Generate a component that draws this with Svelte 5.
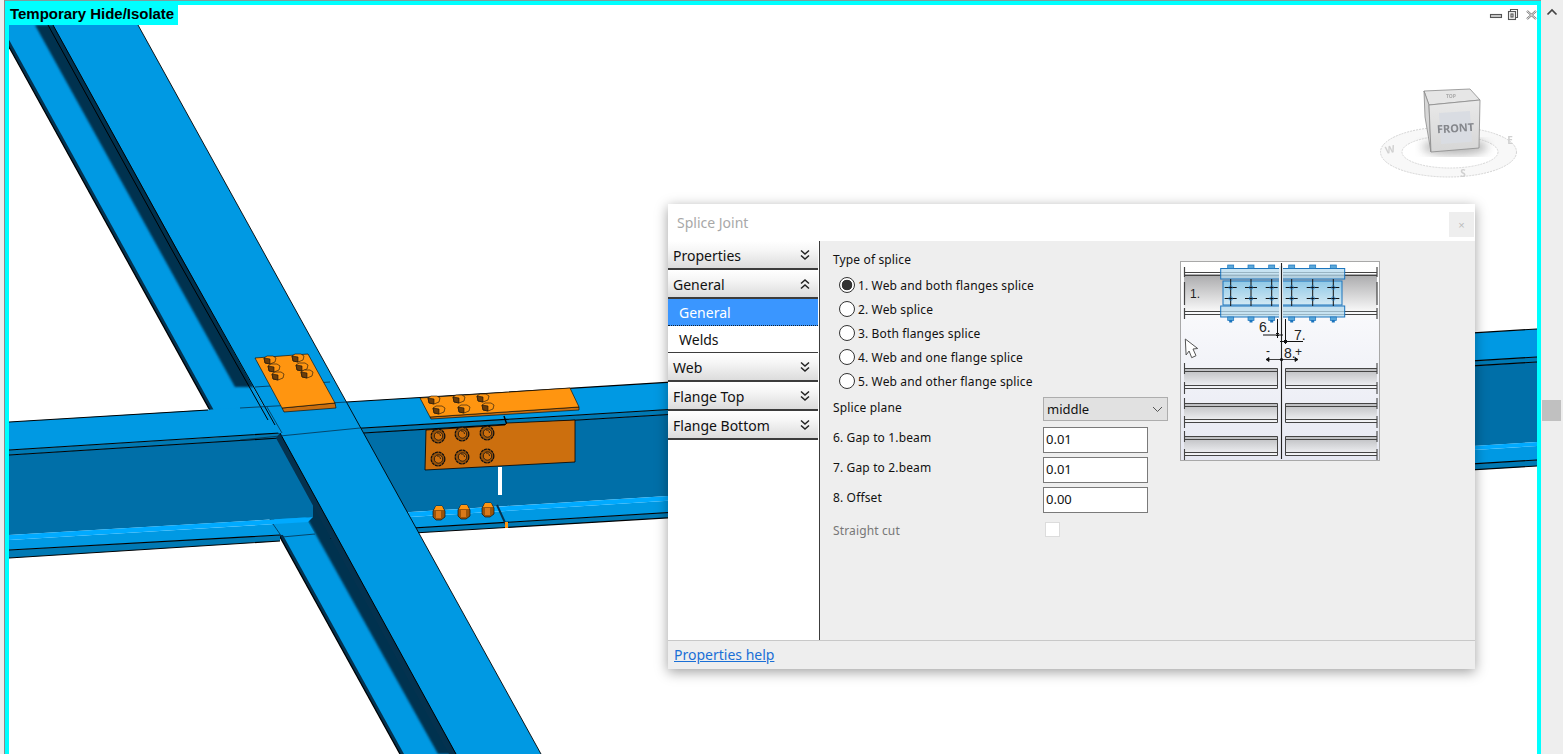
<script>
  const groups = [
    { name: 'Properties', open: false },
    { name: 'General', open: true, items: ['General', 'Welds'] },
    { name: 'Web', open: false },
    { name: 'Flange Top', open: false },
    { name: 'Flange Bottom', open: false }
  ];
  const radios = [
    '1. Web and both flanges splice',
    '2. Web splice',
    '3. Both flanges splice',
    '4. Web and one flange splice',
    '5. Web and other flange splice'
  ];
  const inputs = [
    ['6. Gap to 1.beam', '0.01'],
    ['7. Gap to 2.beam', '0.01'],
    ['8. Offset', '0.00']
  ];
  const topBolts = [[270,359],[298,357],[274,367],[302,366],[278,375],[307,373],[434,399],[459,398],[483,397],[439,409],[464,408],[488,406]];
  const webBolts = [[438,436],[462,434],[487,433],[438,459],[462,457],[487,456]];
  const nuts = [[439,513],[464,512],[488,510]];
  const sketchX = [50.7, 71, 91.7, 111.7, 132.7, 153.3];
  const rowsY = [[107,127],[142,161],[175,194]];
</script>

<div class="screen">
  <div class="strip"></div>
  <main class="viewport">
    <svg class="scene" width="1528" height="749" viewBox="9 5 1528 749">
      <defs>
        <filter id="soft"><feGaussianBlur stdDeviation="1.2" /></filter>
        <filter id="faint"><feGaussianBlur stdDeviation="0.7" /></filter>
        <filter id="softer"><feGaussianBlur stdDeviation="5" /></filter>
        <filter id="haze"><feGaussianBlur stdDeviation="0.35" /></filter>
        <linearGradient id="cubeFace" x1="0" y1="0" x2="0" y2="1">
          <stop offset="0" stop-color="#e9e9e9" /><stop offset="1" stop-color="#d6d6d6" />
        </linearGradient>
      </defs>

      <!-- diagonal beam, lower flange and web shadow -->
      <polygon points="-12,9 53,25 456,754 400,754" fill="#0099e3" />
      <polygon points="-12,9 -8,9 404,754 400,754" fill="#04324f" />
      <path d="M-12 9L400 754" stroke="#000" stroke-width="1.3" fill="none" />
      <polygon points="35,25 58,25 258,387 235,387" fill="#04324f" filter="url(#soft)" />
      <polygon points="313,497 460,754 438,754 305,515" fill="#04324f" filter="url(#soft)" />

      <!-- horizontal beam, left of the crossing -->
      <polygon points="9,422 285,405 285,433 9,450" fill="#0099e3" />
      <polygon points="9,450 285,433 285,438 9,455" fill="#0079b4" />
      <polygon points="9,455 280,438 313,497 313,517 9,535" fill="#006fa8" />
      <polygon points="9,540 308,522 315,534 280,535 9,550" fill="#0099e3" />
      <polygon points="9,535 313,517 308,522 9,540" fill="#00aaff" filter="url(#faint)" />
      <polygon points="9,550 280,535 280,541 9,558" fill="#0079b4" />
      <path d="M9 422L208 410 M9 450L280 433 M9 455L280 438 M9 550L280 535 M9 558L280 541" stroke="#000" stroke-width="1.1" fill="none" />

      <!-- horizontal beam, right of the crossing -->
      <polygon points="330,403 1537,329 1537,357 330,430" fill="#0099e3" />
      <polygon points="330,430 1537,357 1537,362 330,435" fill="#0079b4" />
      <polygon points="330,435 1537,362 1537,442 330,517" fill="#006fa8" />
      <polygon points="330,522 1537,446 1537,460 330,533" fill="#0099e3" />
      <polygon points="330,517 1537,442 1537,446 330,522" fill="#00aaff" filter="url(#faint)" />
      <polygon points="330,533 1537,460 1537,466 330,538" fill="#0079b4" />
      <path d="M330 403L1537 329 M330 430L1537 357 M330 435L1537 362 M330 533L1537 460 M330 538L1537 466" stroke="#000" stroke-width="1.1" fill="none" />

      <!-- diagonal beam, top flange -->
      <polygon points="53,25 138,25 541,754 456,754" fill="#0099e3" />
      <path d="M138 25L541 754" stroke="#000" stroke-width="0.9" fill="none" />
      <path d="M48 25L172 250 L268 420 M53 25L177 250 L275 425" stroke="#000" stroke-width="1" fill="none" />
      <polygon points="280,433 456,754 449,754 276,438" fill="#04324f" />
      <path d="M280 433L456 754" stroke="#000" stroke-width="1" fill="none" />

      <!-- thin hidden lines across the crossing -->
      <g stroke="#06314d" stroke-width="0.8" fill="none">
        <path d="M240 408L347 402 M240 440L360 428 M267 407L282 433 M255 387L330 382 M282 537L315 534 M273 524L282 537" />
      </g>

      <!-- splice gap -->
      <polygon points="498,467 502,467 502,495 498,495" fill="#fff" />
      <path d="M497 505L507 527" stroke="#04324f" stroke-width="2" />
      <polygon points="505,522 508,522 508,528 505,528" fill="#ff9510" />
      <path d="M504 416L507 425" stroke="#000" stroke-width="1.4" />

      <!-- plates -->
      <polygon points="282,408 335,403 336,408 284,412" fill="#c96f10" stroke="#000" stroke-width="0.6" />
      <polygon points="255,358 308,354 335,403 282,408" fill="#ff9510" stroke="#000" stroke-width="0.6" />
      <polygon points="430,417 579,407 579,410 431,419" fill="#c96f10" stroke="#000" stroke-width="0.6" />
      <polygon points="420,398 570,388 579,407 430,417" fill="#ff9510" stroke="#000" stroke-width="0.6" />
      <polygon points="426,430 505,425 507,423 575,420 575,462 425,470" fill="#cc6f0e" stroke="#000" stroke-width="0.8" />

      {#each topBolts as [x, y]}
        <g stroke="#111" stroke-width="0.6">
          <polygon points="{x - 6},{y - 1} {x - 3},{y - 3} {x + 3},{y - 3} {x + 6},{y - 1} {x + 5},{y + 3} {x},{y + 5} {x - 5},{y + 4}" fill="#ff9510" />
          <polygon points="{x - 6},{y - 1} {x},{y} {x},{y + 5} {x - 5},{y + 4}" fill="#6b3d0a" />
        </g>
      {/each}
      {#each webBolts as [x, y]}
        <g fill="none" stroke="#111">
          <circle cx={x} cy={y} r="6.800" fill="#9a540b" stroke-width="1.300" stroke-dasharray="3 0.6" />
          <circle cx={x + 0.500} cy={y} r="4.200" fill="#cc6f0e" stroke-width="0.8" />
          <path d="M{x - 1} {y - 3}a3 3 0 0 1 3.500 3" stroke-width="0.8" />
        </g>
      {/each}
      {#each nuts as [x, y]}
        <g stroke="#111" stroke-width="0.7">
          <polygon points="{x - 6},{y - 2} {x - 3},{y - 7} {x + 3},{y - 7} {x + 6},{y - 2} {x + 6},{y + 4} {x + 2},{y + 7} {x - 3},{y + 7} {x - 6},{y + 4}" fill="#9a540b" />
          <polygon points="{x - 3},{y - 7} {x + 3},{y - 7} {x + 5},{y - 3} {x - 5},{y - 3}" fill="#ff9510" stroke="none" />
          <polygon points="{x - 3},{y - 2} {x + 2},{y - 2} {x + 2},{y + 5} {x - 3},{y + 5}" fill="#d9791a" stroke="none" />
        </g>
      {/each}

      <!-- view cube -->
      <g class="cube" filter="url(#haze)">
        <ellipse cx="1448.500" cy="152" rx="68" ry="25" fill="#f8f8f8" stroke="#d2d2d2" stroke-dasharray="2 1" />
        <ellipse cx="1450" cy="152" rx="48" ry="16" fill="#fff" stroke="#d8d8d8" stroke-dasharray="2 1" />
        <ellipse cx="1455" cy="147" rx="33" ry="8" fill="#999" filter="url(#softer)" opacity="0.7" />
        <polygon points="1424,91 1470,89 1480,100 1429,105" fill="#e6e6e6" stroke="#8a8a8a" stroke-width="0.8" />
        <polygon points="1424,91 1429,105 1431,152 1425,117" fill="#d6d6d6" stroke="#8a8a8a" stroke-width="0.8" />
        <polygon points="1429,105 1480,100 1479,148 1431,152" fill="url(#cubeFace)" stroke="#8a8a8a" stroke-width="0.8" />
        <rect x="1440" y="112" width="31" height="31" fill="#d9dce2" transform="rotate(-4 1455 127)" />
        <text x="1455.500" y="132" text-anchor="middle" class="front" transform="rotate(-4 1456 128)">FRONT</text>
        <text x="1451" y="98" text-anchor="middle" class="tiny">TOP</text>
        <text x="1390" y="153" text-anchor="middle" class="mark" transform="rotate(-12 1390 150)">W</text>
        <text x="1463" y="177" text-anchor="middle" class="mark">S</text>
        <text x="1510" y="144" text-anchor="middle" class="mark">E</text>
      </g>

      <!-- window buttons -->
      <g fill="none" stroke="#555" stroke-width="1.1">
        <rect x="1490.500" y="14.500" width="11" height="3" fill="#ccc" />
        <rect x="1508.500" y="11.500" width="7" height="8" fill="#eee" />
        <path d="M1510.500 11.500v-2h7v8h-2" />
        <rect x="1511" y="14" width="2" height="3" />
        <path d="M1527 11l9 8 M1536 11l-9 8" stroke-width="2.200" stroke="#777" />
        <path d="M1527 11l9 8 M1536 11l-9 8" stroke-width="0.8" stroke="#fff" />
      </g>
    </svg>

    <div class="tag">Temporary Hide/Isolate</div>

    <section class="dialog">
      <header class="head">
        <span class="title">Splice Joint</span>
        <button class="close" aria-label="Close">×</button>
      </header>
      <div class="middle">
        <nav class="side">
          {#each groups as g}
            <div class="group">
              <span>{g.name}</span>
              <svg width="10" height="12" viewBox="0 0 10 12" class:flip={g.open}>
                <path d="M1 1.500l4 3.500 4-3.500 M1 6.500l4 3.500 4-3.500" fill="none" stroke="#222" stroke-width="1.500" />
              </svg>
            </div>
            {#if g.items}
              {#each g.items as it, i}
                <div class="item" class:sel={i === 0} class:last={i === g.items.length - 1}>{it}</div>
              {/each}
            {/if}
          {/each}
        </nav>
        <div class="content">
          <div class="form">
            <div class="legend">Type of splice</div>
            <div class="radios">
              {#each radios as r, i}
                <div class="radio">
                  <span class="dot" class:on={i === 0}></span>
                  <span>{r}</span>
                </div>
              {/each}
            </div>
            <div class="row first">
              <span class="lbl">Splice plane</span>
              <div class="select">
                <span>middle</span>
                <svg width="11" height="7" viewBox="0 0 11 7"><path d="M1 1l4.500 4.500L10 1" fill="none" stroke="#555" /></svg>
              </div>
            </div>
            {#each inputs as [l, v]}
              <div class="row">
                <span class="lbl">{l}</span>
                <div class="input">{v}</div>
              </div>
            {/each}
            <div class="row check">
              <span class="lbl muted">Straight cut</span>
              <span class="box"></span>
            </div>
          </div>

          <div class="sketch">
            <svg width="198" height="198" viewBox="1 1 198 198">
              <defs>
                <linearGradient id="page" x1="0" y1="0" x2="0" y2="1">
                  <stop offset="0" stop-color="#fff" /><stop offset="1" stop-color="#e6e8f2" />
                </linearGradient>
                <linearGradient id="web" x1="0" y1="0" x2="0" y2="1">
                  <stop offset="0" stop-color="#a9a9ab" /><stop offset="1" stop-color="#fafafa" />
                </linearGradient>
                <linearGradient id="small" x1="0" y1="0" x2="0" y2="1">
                  <stop offset="0" stop-color="#b9babd" /><stop offset="1" stop-color="#f4f5f8" />
                </linearGradient>
                <linearGradient id="plate" x1="0" y1="0" x2="0" y2="1">
                  <stop offset="0" stop-color="#8fc8e6" /><stop offset="1" stop-color="#d2e9f4" />
                </linearGradient>
              </defs>
              <rect x="1" y="1" width="198" height="198" fill="url(#page)" />
              <rect x="4" y="13" width="193" height="38" fill="url(#web)" />
              <g stroke="#444" stroke-width="1.200" fill="none">
                <path d="M4 11.500H197 M4 14.500H197 M4 50.500H197 M4 53.500H197" />
                <path d="M4.500 6V16 M4.500 21V44 M4.500 47V58 M197 6V16 M197 21V44 M197 47V58" />
              </g>
              <rect x="40.700" y="7.500" width="124" height="10.500" fill="#b4d9ee" fill-opacity="0.75" stroke="#1b74bd" />
              <rect x="43" y="20" width="119" height="24" fill="url(#plate)" stroke="#1b74bd" />
              <rect x="40.700" y="45" width="124" height="11" fill="#b4d9ee" fill-opacity="0.75" stroke="#1b74bd" />
              {#each sketchX as x}
                <g>
                  <rect x={x - 3} y="4" width="6" height="3.500" fill="#5aa8da" stroke="#1b74bd" stroke-width="0.7" />
                  <rect x={x - 3} y="56" width="6" height="3.500" fill="#5aa8da" stroke="#1b74bd" stroke-width="0.7" />
                  <rect x={x - 1.500} y="59" width="3" height="2.500" fill="#1b74bd" />
                  <path d="M{x} 18V45 M{x - 6} 26.500H{x + 6} M{x - 6} 37.500H{x + 6}" stroke="#111" fill="none" />
                  <circle cx={x} cy="26.500" r="1.800" fill="none" stroke="#1b74bd" stroke-width="0.7" />
                  <circle cx={x} cy="37.500" r="1.800" fill="none" stroke="#1b74bd" stroke-width="0.7" />
                </g>
              {/each}
              <rect x="99" y="5" width="4" height="54" fill="#e5eef4" />
              <path d="M101.500 2V198" stroke="#222" stroke-width="1.100" />
              <path d="M97.500 58V77 M105.500 58V83 M83 74H103 M100 80.500H123" stroke="#111" fill="none" />
              <path d="M86 98.500H118 M86 98.500l3-2v4z M118 98.500l-3-2v4z" stroke="#111" fill="#111" stroke-width="0.8" />
              <path d="M96 72l3 3 M99 72l-3 3 M104 79l3 3 M107 79l-3 3" stroke="#111" />
              <circle cx="101.500" cy="98.500" r="1.600" fill="#111" />
              <text x="10" y="37" class="n">1.</text>
              <text x="79" y="71" class="n big">6.</text>
              <text x="114" y="79" class="n big">7.</text>
              <text x="104" y="97" class="n big">8.</text>
              <text x="86" y="94" class="n">-</text>
              <text x="115" y="95" class="n">+</text>
              <path d="M5.300 78l0.800 16 3-4 2.600 6.700 4.300-2-3-6.700 4.700-0.500z" fill="#fff" stroke="#555" />
              {#each rowsY as [a, b]}
                <rect x="4" y={a} width="93.500" height={b - a} fill="url(#small)" />
                <rect x="105.500" y={a} width="91.500" height={b - a} fill="url(#small)" />
                <path d="M4 {a + 0.500}H97.500 M4 {a + 3.500}H97.500 M4 {b + 0.500}H97.500 M4 {b - 2.500}H97.500 M97.500 {a + 0.500}V{b + 0.500} M105.500 {a + 0.500}H197 M105.500 {a + 3.500}H197 M105.500 {b + 0.500}H197 M105.500 {b - 2.500}H197 M105.500 {a + 0.500}V{b + 0.500}" stroke="#444" fill="none" />
                <path d="M4.500 {a - 5}V{a + 6} M4.500 {b - 6}V{b + 6} M197 {a - 5}V{a + 6} M197 {b - 6}V{b + 6}" stroke="#444" stroke-width="1.100" />
              {/each}
            </svg>
          </div>
        </div>
      </div>
      <footer class="foot"><a href="#help">Properties help</a></footer>
    </section>
  </main>
  <aside class="scrollbar">
    <svg width="12" height="8" viewBox="0 0 12 8"><path d="M1.500 6.500L6 2l4.500 4.500" fill="none" stroke="#444" stroke-width="1.700" /></svg>
    <div class="thumb"></div>
  </aside>
</div>

<style>
  :global(body) {
    margin: 0;
    overflow: hidden;
    background: #fff;
  }
  .screen {
    display: flex;
    width: 1563px;
    height: 754px;
    overflow: hidden;
    font-family: "Noto Sans", "Open Sans", sans-serif;
    color: #111;
  }
  .strip {
    width: 4px;
    flex: none;
    background: #eee;
    border-right: 1px solid #8a8a8a;
  }
  .viewport {
    position: relative;
    flex: none;
    width: 1528px;
    height: 749px;
    border: 4px solid #00ffff;
    border-bottom: 0;
    margin-top: 1px;
    box-shadow: 0 -1px 0 #7f9c9c;
    background: #fff;
    overflow: hidden;
  }
  .scene {
    position: absolute;
    left: 0;
    top: 0;
  }
  .front {
    font: 700 11px "Noto Sans", sans-serif;
    fill: #85878c;
  }
  .tiny {
    font: 700 5px "Noto Sans", sans-serif;
    fill: #aaa;
  }
  .mark {
    font: 700 10px "Noto Sans", sans-serif;
    fill: #d0d0d0;
  }
  .tag {
    position: absolute;
    left: 0;
    top: 0;
    height: 20px;
    width: 169px;
    padding-left: 1px;
    box-sizing: border-box;
    background: #00ffff;
    color: #000;
    font: 700 15px/17px "Liberation Sans", Arial, sans-serif;
    letter-spacing: -0.03px;
    white-space: nowrap;
  }
  .dialog {
    position: absolute;
    left: 659px;
    top: 199px;
    width: 807px;
    height: 465px;
    display: flex;
    flex-direction: column;
    background: #fff;
    box-shadow: 0 3px 12px rgba(0, 0, 0, 0.38);
  }
  .head {
    height: 37px;
    flex: none;
    display: flex;
    align-items: center;
    justify-content: space-between;
    padding: 0 1px 0 9px;
    box-sizing: border-box;
  }
  .title {
    color: #a8a8a8;
    font-size: 14px;
  }
  .close {
    width: 25px;
    height: 25px;
    margin-top: 4px;
    padding: 0;
    border: 0;
    background: #eee;
    color: #bbb;
    font-size: 11px;
  }
  .middle {
    flex: 1;
    display: flex;
    min-height: 0;
  }
  .side {
    width: 150px;
    flex: none;
    margin-right: 1px;
    background: #fff;
    font-size: 14px;
  }
  .group {
    height: 29px;
    box-sizing: border-box;
    padding: 2px 8px 0 5px;
    display: flex;
    align-items: center;
    justify-content: space-between;
    border-bottom: 2px solid #3c3c3c;
    background: linear-gradient(#fff 0, #f6f6f6 35%, #dcdcdc 100%);
  }
  .group svg {
    margin-top: -2px;
  }
  .group svg.flip {
    transform: scaleY(-1);
  }
  .item {
    height: 27px;
    box-sizing: border-box;
    padding-left: 11px;
    display: flex;
    align-items: center;
    background: #fff;
  }
  .item.sel {
    background: #3a96ff;
    color: #fff;
    border-bottom: 1px dotted #123;
  }
  .item.last {
    border-bottom: 1px solid #3c3c3c;
  }
  .content {
    flex: 1;
    display: flex;
    background: #eee;
    border-left: 1px solid #3c3c3c;
    padding: 8px 0 0 13px;
    font-size: 12px;
  }
  .form {
    width: 335px;
    flex: none;
  }
  .legend {
    height: 20px;
    line-height: 22px;
    letter-spacing: 0.14px;
  }
  .radios {
    margin-top: 4px;
    padding-left: 6px;
    letter-spacing: 0.14px;
  }
  .radio {
    height: 24px;
    display: flex;
    align-items: center;
    gap: 3px;
  }
  .dot {
    width: 14px;
    height: 14px;
    flex: none;
    border: 1px solid #333;
    border-radius: 50%;
    background: #fff;
  }
  .dot.on {
    background: radial-gradient(circle, #333 0 5px, #fff 5.600px);
  }
  .row {
    display: flex;
    align-items: flex-start;
    margin-top: 4px;
  }
  .row.first {
    margin-bottom: 6px;
  }
  .lbl {
    width: 210px;
    flex: none;
    line-height: 22px;
    height: 20px;
    letter-spacing: 0.14px;
  }
  .muted {
    color: #777;
  }
  .select {
    width: 125px;
    height: 24px;
    box-sizing: border-box;
    border: 1px solid #adadad;
    background: #e1e1e1;
    display: flex;
    align-items: center;
    justify-content: space-between;
    padding: 0 4px 0 3px;
    font-size: 13px;
  }
  .input {
    width: 105px;
    height: 26px;
    box-sizing: border-box;
    border: 1px solid #7a7a7a;
    background: #fff;
    padding: 0 2px;
    line-height: 22px;
    font-size: 13px;
  }
  .row.check {
    margin-top: 7px;
  }
  .box {
    width: 15px;
    height: 15px;
    margin: 2px 0 0 2px;
    box-sizing: border-box;
    border: 1px solid #dcdcdc;
    background: #fff;
  }
  .sketch {
    margin: 12px 0 0 12px;
    width: 200px;
    height: 200px;
    box-sizing: border-box;
    border: 1px solid #a8a8a8;
    background: #fff;
  }
  .sketch svg {
    display: block;
  }
  .n {
    font: 12px "Liberation Sans", Arial, sans-serif;
    fill: #222;
  }
  .n.big {
    font-size: 14px;
  }
  .foot {
    height: 29px;
    flex: none;
    box-sizing: border-box;
    border-top: 1px solid #c8c8c8;
    background: #eee;
    padding-left: 6px;
    line-height: 27px;
    font-size: 14px;
  }
  .foot a {
    color: #1a6fd6;
  }
  .scrollbar {
    flex: 1;
    background: #eee;
    position: relative;
    display: flex;
    justify-content: center;
    padding-top: 8px;
    box-sizing: border-box;
  }
  .scrollbar svg {
    display: block;
  }
  .thumb {
    position: absolute;
    left: 1px;
    top: 400px;
    width: 19px;
    height: 21px;
    background: #c0c0c0;
  }
</style>
